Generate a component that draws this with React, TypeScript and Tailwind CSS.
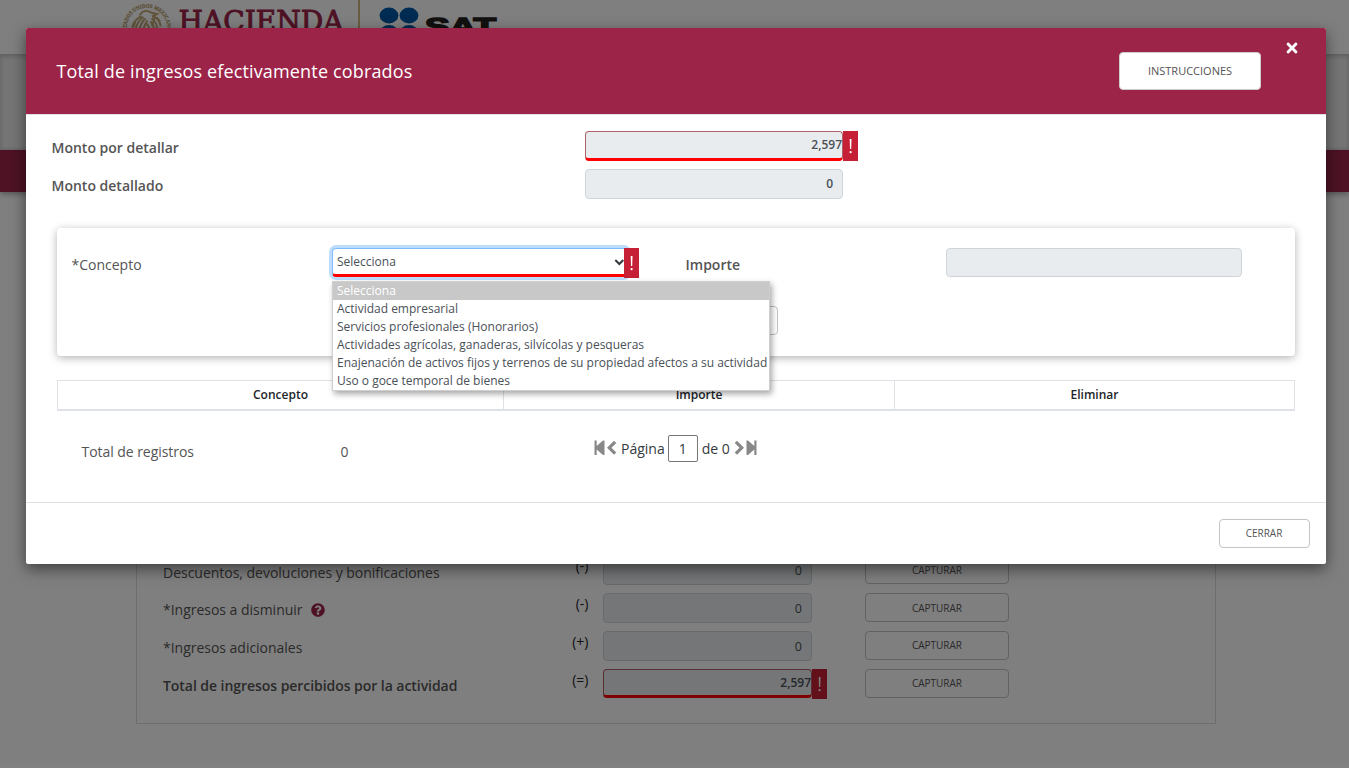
import { useState } from "react";
import type { ReactNode } from "react";
import { FaTimes, FaQuestionCircle } from "react-icons/fa";

function Warning({ className = "" }: { className?: string }) {
  return (
    <span className={"flex shrink-0 items-center justify-center bg-[#c62036] " + className}>
      <svg width="5" height="18" viewBox="0 0 5 18" fill="#fff">
        <path d="M1.7 2h1.8l-.3 10h-1.2z" />
        <circle cx="2.6" cy="15.2" r="1.1" />
      </svg>
    </span>
  );
}

function Emblem() {
  return (
    <svg className="overflow-visible" width="52" height="52" viewBox="0 0 52 52" fill="none">
      <defs>
        <path id="ring" d="M6.600 32A20.300 20.300 0 1 1 45.400 32" />
      </defs>
      <text fill="#b3955f" stroke="#b3955f" strokeWidth="0.2" fontFamily="'Liberation Serif', serif" fontWeight="bold" fontSize="5.600">
        <textPath href="#ring" textLength="75" lengthAdjust="spacingAndGlyphs">ESTADOS UNIDOS MEXICANOS</textPath>
      </text>
      <g stroke="#c3a877" strokeWidth="2" strokeLinecap="round">
        <path d="M19 12.500c3-4 7.500-4.500 11-2l6 1.500-4 2c2 3 1 6-1 9" />
        <path d="M20 14.500c-4 2-7 5-8.500 10M22 15.500c-4 3-6.500 6-7.500 12M24 17c-3 3-5.500 7-5.500 12M26 19c-2 3-3.500 6-3.500 10" />
        <path d="M32 14.500c4 1 6.500 4 7.500 9M31 17c3 2 5 5 5 10M30 20c2 2 3 4 3 8M14 21l-2 4M36 16l2.500 3M26 22l4 7" />
        <path d="M12 32c7 8 20 8 28 0" />
      </g>
    </svg>
  );
}

function PageHeader() {
  return (
    <header className="flex h-[54px] shrink-0 overflow-hidden bg-white pl-[121px] shadow-[0_1px_4px_rgba(0,0,0,0.45)]">
      <div className="pt-[2px]">
        <Emblem />
      </div>
      <div className="ml-[5px] pt-[5px]">
        <svg width="166" height="40" viewBox="0 0 166 40">
          <text x="0.500" y="25.800" textLength="165" lengthAdjust="spacingAndGlyphs" fill="#9d2449" stroke="#9d2449" strokeWidth="0.9" fontFamily="'DejaVu Serif', serif" fontSize="27">HACIENDA</text>
        </svg>
      </div>
      <div className="ml-[14px] w-[2px] bg-[#d0b880]" />
      <div className="ml-[19px] pt-[7px]">
        <svg width="120" height="40" viewBox="0 0 120 40">
          <g fill="#0057a4">
            <ellipse cx="10" cy="8.500" rx="9.400" ry="7.900" />
            <ellipse cx="30" cy="8.500" rx="9.400" ry="7.900" />
            <ellipse cx="10" cy="26" rx="9.400" ry="7.900" />
            <ellipse cx="30" cy="26" rx="9.400" ry="7.900" />
          </g>
          <text x="46" y="27.800" textLength="71" lengthAdjust="spacingAndGlyphs" fill="#25231f" stroke="#25231f" strokeWidth="1.6" fontFamily="'Liberation Sans', sans-serif" fontWeight="bold" fontSize="24">SAT</text>
        </svg>
      </div>
    </header>
  );
}

type Row = { label: string; sign: string; value: string; help?: boolean; total?: boolean };

const rows: Row[] = [
  { label: "Descuentos, devoluciones y bonificaciones", sign: "(-)", value: "0" },
  { label: "*Ingresos a disminuir", sign: "(-)", value: "0", help: true },
  { label: "*Ingresos adicionales", sign: "(+)", value: "0" },
  { label: "Total de ingresos percibidos por la actividad", sign: "(=)", value: "2,597", total: true },
];

function FormRow({ row }: { row: Row }) {
  return (
    <div className="flex h-[37.8px] items-start">
      <div className={"flex w-[400px] items-center pt-[6.3px] text-sm leading-[22px] " + (row.total ? "font-semibold tracking-[-0.05px]" : "tracking-[-0.02px]")}>
        {row.label}
        {row.help && <FaQuestionCircle className="ml-2 text-[14px] text-[#9d2449]" />}
      </div>
      <div className="mr-[14.5px] w-[25.5px] text-right text-sm leading-[22px] text-[#212529]">{row.sign}</div>
      <div className="flex w-[262px]">
        {row.total ? (
          <>
            <div className="flex h-[29px] w-[209px] items-center justify-end rounded-[4px] border border-b-[3px] border-[#b06068] border-b-[#ff0000] bg-[#e9ecef] pt-px text-[12px] font-semibold text-[#495057]">{row.value}</div>
            <Warning className="h-[30px] w-[15px]" />
          </>
        ) : (
          <div className="flex h-[30px] w-[209px] items-center justify-end rounded-[4px] border border-[#ced4da] bg-[#e9ecef] pr-[9px] pt-[2px] text-[12.5px] text-[#495057]">{row.value}</div>
        )}
      </div>
      <button className="h-[29px] w-[144px] rounded-[4px] border border-[#c4c4c4] bg-white pt-px text-[10px] text-[#545454]">CAPTURAR</button>
    </div>
  );
}

function Page() {
  return (
    <div className="flex h-full flex-col bg-white text-[#545454]">
      <PageHeader />
      <div className="h-[96px] shrink-0 bg-[#ebebeb] shadow-[inset_0_2px_5px_rgba(0,0,0,0.2)]" />
      <div className="h-[42px] shrink-0 bg-[#9d2449] shadow-[0_2px_6px_rgba(0,0,0,0.35)]" />
      <div className="ml-[136px] mr-[133px] flex h-[532px] flex-col justify-end border border-t-0 border-[#dcdcdc] pb-[16.5px] pl-[26px]">
        {rows.map((row) => (
          <FormRow key={row.label} row={row} />
        ))}
      </div>
    </div>
  );
}

function AmountField({ label, children }: { label: string; children: ReactNode }) {
  return (
    <div className="flex h-[38px] items-start">
      <div className="w-[533.5px] pt-[6px] text-sm font-semibold leading-[22px]">{label}</div>
      {children}
    </div>
  );
}

const options = [
  "Selecciona",
  "Actividad empresarial",
  "Servicios profesionales (Honorarios)",
  "Actividades agrícolas, ganaderas, silvícolas y pesqueras",
  "Enajenación de activos fijos y terrenos de su propiedad afectos a su actividad",
  "Uso o goce temporal de bienes",
];

function ConceptSelect() {
  const [selected, setSelected] = useState(options[0]);
  return (
    <div className="relative flex h-[30px] w-[353.5px]">
      <button className="flex h-[29px] w-[296px] shrink-0 items-center justify-between rounded-[4px] border border-b-[3px] border-[#80bdff] border-b-[#ff0000] bg-white pl-1 pr-[2px] text-[12px] text-[#495057] shadow-[0_0_0_3px_#bfdeff]">
        {selected}
        <svg className="mt-px" width="11" height="7" viewBox="0 0 11 7" fill="none" stroke="#343a40" strokeWidth="2">
          <path d="M1.3 1 5.300 5l4-4" />
        </svg>
      </button>
      <Warning className="relative -ml-[4px] h-[30px] w-[15px]" />
      <ul className="absolute left-0 top-[33px] z-10 w-[438px] border border-[#cfcfcf] bg-white text-[12px] text-[#495057] shadow-[2px_3px_6px_rgba(0,0,0,0.35)]">
        {options.map((o) => (
          <li
            key={o}
            onClick={() => setSelected(o)}
            className={"h-[18px] whitespace-nowrap pl-[4px] leading-[18px] " + (o === selected ? "bg-[#c8c8c8] text-white" : "")}
          >
            {o}
          </li>
        ))}
      </ul>
    </div>
  );
}

function PagerIcons({ className = "" }: { className?: string }) {
  return (
    <svg className={"mb-[2px] " + className} width="23" height="16" viewBox="0 0 23 16" fill="#888888">
      <path d="M0.500 0.500h2.200v5.500L9 .5h1.500v14.500H9L2.700 9.500v5.500h-2.200z" />
      <path d="M20 .8 22.300 3 17.500 7.800l4.800 4.800L20 14.800l-7-7z" />
    </svg>
  );
}

function Modal() {
  return (
    <div className="flex h-[536px] w-[1300px] flex-col rounded-[2px] bg-white text-[#545454] shadow-[0_5px_15px_rgba(0,0,0,0.5)]">
      <div className="flex h-[87px] shrink-0 items-start rounded-t-[2px] border-b border-[#dee2e6] bg-[#9d2449] pl-[30.500px]">
        <h1 className="flex-1 pt-[30px] text-[18px] leading-[27px] tracking-[0.155px] text-white">Total de ingresos efectivamente cobrados</h1>
        <button className="mt-6 h-[38px] w-[142px] rounded-[4px] border border-[#cccccc] bg-white text-[11px]">INSTRUCCIONES</button>
        <button className="ml-[23px] mr-[26px] mt-[12px] text-[16px] text-white">
          <FaTimes />
        </button>
      </div>

      <div className="h-[387px] shrink-0">
        <div className="pl-[25.5px] pt-[16px]">
          <AmountField label="Monto por detallar">
            <div className="flex h-[30px] w-[258px] items-center justify-end rounded-[4px] border border-b-[3px] border-[#b06068] border-b-[#ff0000] bg-[#e9ecef] text-[12px] font-semibold text-[#495057]">2,597</div>
            <Warning className="h-[30px] w-[15px]" />
          </AmountField>
          <AmountField label="Monto detallado">
            <div className="flex h-[30px] w-[258px] items-center justify-end rounded-[4px] border border-[#ced4da] bg-[#e9ecef] pr-[9px] text-[12px] font-semibold text-[#495057]">0</div>
          </AmountField>
        </div>

        <section className="ml-[31px] mt-[21px] h-[128px] w-[1238px] rounded-[4px] bg-white pt-[20px] shadow-[0_2px_8px_rgba(0,0,0,0.3)]">
          <div className="flex items-start">
            <div className="w-[275px] pl-[14.5px] pt-[6px] text-sm leading-[22px]">*Concepto</div>
            <ConceptSelect />
            <div className="w-[260.5px] pt-[6px] text-sm font-semibold leading-[22px]">Importe</div>
            <div className="h-[29px] w-[296px] rounded-[4px] border border-[#ced4da] bg-[#e9ecef]" />
          </div>
          <div className="mt-[28px] flex justify-center pl-[84px]">
            <div className="h-[29px] w-[120px] rounded-[4px] border border-[#c4c4c4]" />
          </div>
        </section>

        <div className="ml-[31px] mt-[24px] flex h-[31px] w-[1238px] border border-b-2 border-[#dee2e6] text-center text-[12px] font-semibold leading-[28px] text-[#212529]">
          <div className="w-[446px] border-r border-[#dee2e6]">Concepto</div>
          <div className="w-[391px] border-r border-[#dee2e6]">Importe</div>
          <div className="flex-1">Eliminar</div>
        </div>

        <div className="flex items-start pl-[55.5px] pt-[23px] text-sm leading-[22px]">
          <div className="w-[259px] pt-[7px] tracking-[-0.05px]">Total de registros</div>
          <div className="w-[253.500px] pt-[7px]">0</div>
          <div className="flex items-center pt-px text-[#343a40]">
            <PagerIcons />
            <span className="ml-[4px]">Página</span>
            <span className="ml-[3px] mr-[4px] flex h-[27px] w-[30px] items-center justify-center rounded-[2px] border border-[#767676]">1</span>
            <span>de 0</span>
            <PagerIcons className="ml-[4px] -scale-x-100" />
          </div>
        </div>
      </div>

      <div className="flex flex-1 items-start justify-end border-t border-[#dee2e6] pr-4 pt-4">
        <button className="h-[29px] w-[91px] rounded-[4px] border border-[#c4c4c4] bg-white pl-[5px] pr-[6px] text-[10px]">CERRAR</button>
      </div>
    </div>
  );
}

export default function App() {
  return (
    <div className="relative h-[768px] w-[1349px] overflow-hidden font-['Open_Sans','Noto_Sans',sans-serif]">
      <Page />
      <div className="absolute inset-0 bg-black/50 pl-[26px] pt-[28px]">
        <Modal />
      </div>
    </div>
  );
}
